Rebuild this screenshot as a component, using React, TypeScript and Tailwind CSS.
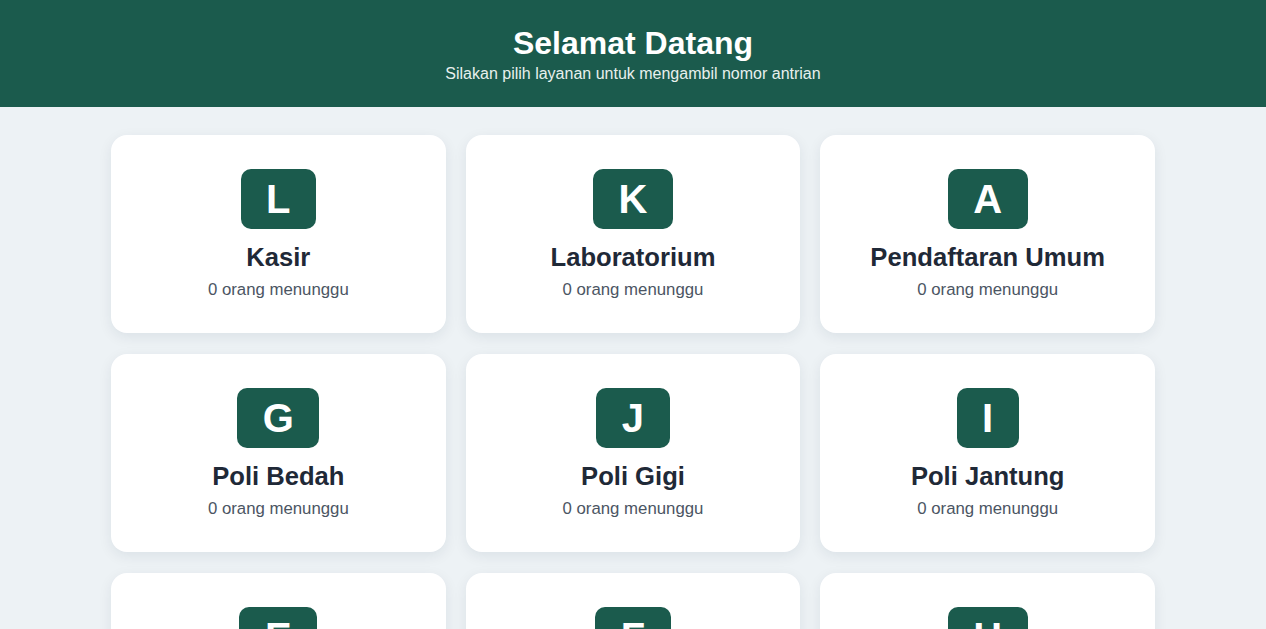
import React from "react";

const services = [
  { code: "L", name: "Kasir", waiting: 0 },
  { code: "K", name: "Laboratorium", waiting: 0 },
  { code: "A", name: "Pendaftaran Umum", waiting: 0 },
  { code: "G", name: "Poli Bedah", waiting: 0 },
  { code: "J", name: "Poli Gigi", waiting: 0 },
  { code: "I", name: "Poli Jantung", waiting: 0 },
  { code: "E", name: "Poli Anak", waiting: 0 },
  { code: "F", name: "Poli Kandungan", waiting: 0 },
  { code: "H", name: "Poli Mata", waiting: 0 },
];

export default function App() {
  return (
    <div
      className="min-h-screen bg-[#edf2f5]"
      style={{ fontFamily: '"Liberation Sans", Arial, Helvetica, sans-serif' }}
    >
      <header className="bg-[#1b5b4d] text-white text-center pt-[24px] pb-[21px]">
        <h1 className="text-[32px] font-bold leading-[38px]">Selamat Datang</h1>
        <p className="text-[16px] leading-[24px] text-[#e8f0ee]">
          Silakan pilih layanan untuk mengambil nomor antrian
        </p>
      </header>
      <main className="max-w-[1044px] mx-auto pt-[28px] pb-8 grid grid-cols-3 gap-x-[20px] gap-y-[21px]">
        {services.map((s) => (
          <div
            key={s.code}
            className="bg-white rounded-[16px] shadow-[0_4px_14px_rgba(15,40,60,0.08)] pt-[34px] pb-[31px] flex flex-col items-center text-center"
          >
            <div className="h-[60px] px-[25.5px] rounded-[10px] bg-[#1b5b4d] text-white text-[40px] font-bold flex items-center justify-center leading-none">
              {s.code}
            </div>
            <div className="mt-3 text-[25.6px] leading-[32px] font-bold text-[#1f2937]">
              {s.name}
            </div>
            <div className="mt-[5px] text-[16.8px] leading-[24px] text-[#4b5563]">
              {s.waiting} orang menunggu
            </div>
          </div>
        ))}
      </main>
    </div>
  );
}
